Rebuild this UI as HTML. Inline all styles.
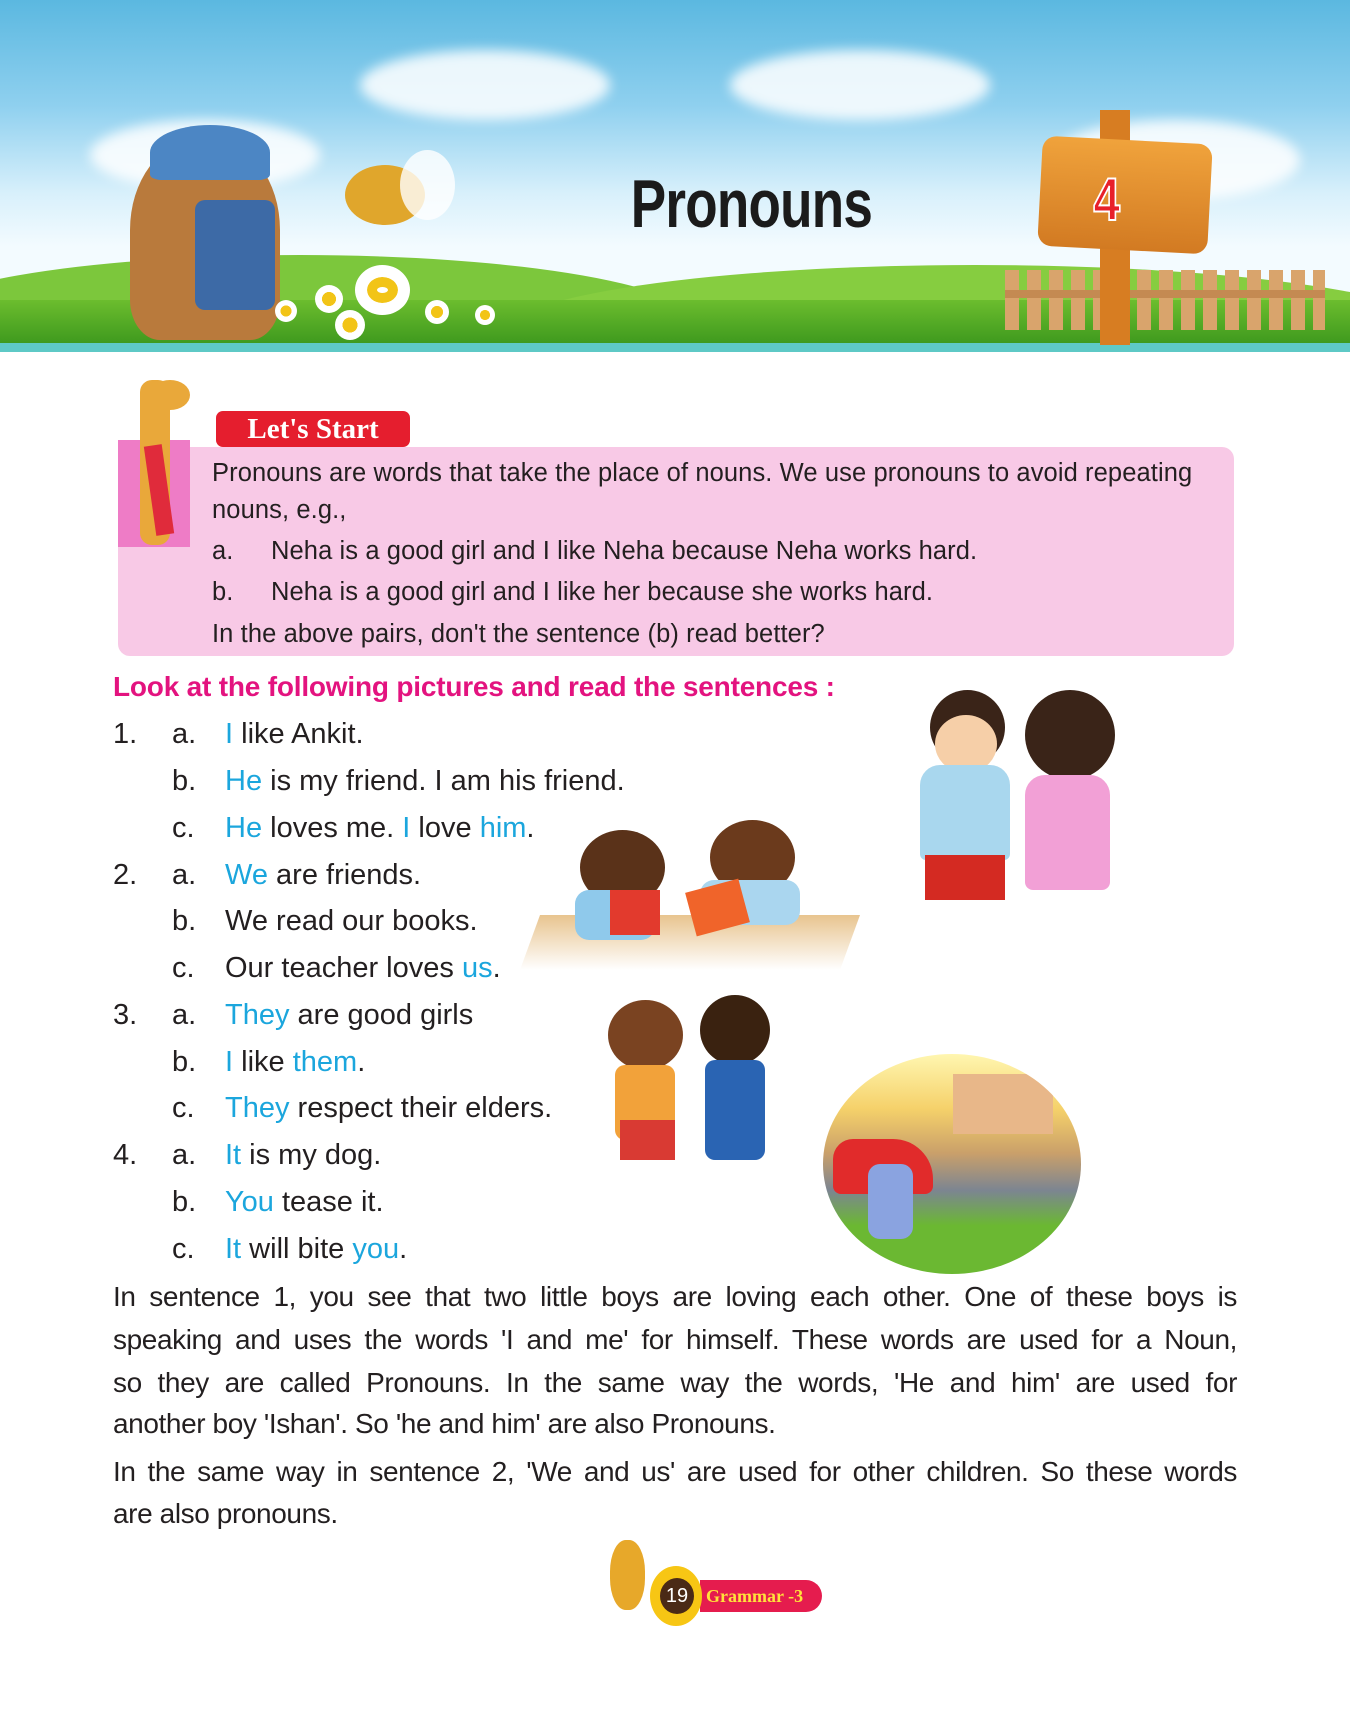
<!DOCTYPE html>
<html><head><meta charset="utf-8"><style>
*{margin:0;padding:0;box-sizing:border-box}
body{width:1350px;height:1725px;position:relative;background:#fff;font-family:"Liberation Sans",sans-serif;color:#231f20;overflow:hidden}
.a{position:absolute;white-space:nowrap}
.b{color:#1ba6dd}
.box{position:absolute;left:118px;top:447px;width:1116px;height:209px;background:#f8c9e6;border-radius:12px}
.t{font-size:25.5px;letter-spacing:0.1px;line-height:30px}
.l{font-size:29px;letter-spacing:0;line-height:34px}
.p{position:absolute;left:113px;width:1124px;font-size:28px;letter-spacing:-0.4px;line-height:43px;text-align:justify;text-align-last:justify;white-space:nowrap}
#hd{position:absolute;left:0;top:0;width:1350px;height:352px;overflow:hidden}
</style></head><body>
<div id="hd">
<div class="a" style="left:0;top:0;width:1350px;height:352px;background:linear-gradient(#5bb8e0 0%,#8fd0ef 30%,#d8f0fb 55%,#f3fbff 70%)"></div>
<div class="a" style="left:90px;top:120px;width:230px;height:70px;border-radius:50%;background:rgba(255,255,255,.85);filter:blur(6px)"></div>
<div class="a" style="left:360px;top:50px;width:250px;height:70px;border-radius:50%;background:rgba(255,255,255,.85);filter:blur(6px)"></div>
<div class="a" style="left:730px;top:50px;width:260px;height:70px;border-radius:50%;background:rgba(255,255,255,.85);filter:blur(6px)"></div>
<div class="a" style="left:1050px;top:120px;width:250px;height:80px;border-radius:50%;background:rgba(255,255,255,.85);filter:blur(6px)"></div>
<div class="a" style="left:-100px;top:255px;width:800px;height:140px;border-radius:50%;background:#7cc73c"></div>
<div class="a" style="left:500px;top:265px;width:950px;height:140px;border-radius:50%;background:#86cd40"></div>
<div class="a" style="left:0;top:300px;width:1350px;height:43px;background:linear-gradient(#6cbd2e,#3f9a1e)"></div>
<div class="a" style="left:0;top:343px;width:1350px;height:9px;background:#5ec9c6"></div>
<div class="a" style="left:1005px;top:270px;width:320px;height:60px;background:repeating-linear-gradient(90deg,#d9a46c 0 14px,transparent 14px 22px)"></div>
<div class="a" style="left:1005px;top:290px;width:320px;height:8px;background:#c48a52"></div>
<div class="a" style="left:130px;top:140px;width:150px;height:200px;border-radius:45% 45% 20% 20%;background:#b97a3c"></div>
<div class="a" style="left:150px;top:125px;width:120px;height:55px;border-radius:50% 50% 10% 10%;background:#4c86c4"></div>
<div class="a" style="left:195px;top:200px;width:80px;height:110px;background:#3d6aa6;border-radius:10px"></div>
<div class="a" style="left:345px;top:165px;width:80px;height:60px;border-radius:50%;background:#e0a62c"></div>
<div class="a" style="left:400px;top:150px;width:55px;height:70px;border-radius:50%;background:rgba(255,255,255,.8)"></div>
<div class="a" style="left:355px;top:265px;width:55px;height:50px;border-radius:50%;background:#fff;border:12px solid #fff;box-shadow:inset 0 0 0 10px #f2c417"></div>
<div class="a" style="left:315px;top:285px;width:28px;height:28px;border-radius:50%;background:radial-gradient(#f2c417 35%,#fff 36%)"></div>
<div class="a" style="left:335px;top:310px;width:30px;height:30px;border-radius:50%;background:radial-gradient(#f2c417 35%,#fff 36%)"></div>
<div class="a" style="left:425px;top:300px;width:24px;height:24px;border-radius:50%;background:radial-gradient(#f2c417 35%,#fff 36%)"></div>
<div class="a" style="left:475px;top:305px;width:20px;height:20px;border-radius:50%;background:radial-gradient(#f2c417 35%,#fff 36%)"></div>
<div class="a" style="left:275px;top:300px;width:22px;height:22px;border-radius:50%;background:radial-gradient(#f2c417 35%,#fff 36%)"></div>
<div class="a" style="left:1100px;top:110px;width:30px;height:235px;background:#d77d22"></div>
<div class="a" style="left:1040px;top:140px;width:170px;height:110px;background:linear-gradient(#f0a33c,#d27a22);border-radius:14px;transform:rotate(3deg)"></div>
<div class="a" style="left:1090px;top:165px;font-size:60px;font-weight:bold;color:#e8202a;transform:scaleX(.8);-webkit-text-stroke:2px #fff">4</div>
<div class="a" style="left:600px;top:165px;width:280px;text-align:center;font-size:68px;font-weight:bold;color:#1b1b1b;transform:scaleX(.78);letter-spacing:-1px">Pronouns</div>
</div>

<div class="box"></div>
<div class="a" style="left:118px;top:440px;width:72px;height:107px;background:#ee7cc6"></div>
<div class="a" style="left:140px;top:380px;width:30px;height:165px;background:#e9a83a;border-radius:12px"></div>
<div class="a" style="left:150px;top:380px;width:40px;height:30px;background:#e9a83a;border-radius:50%"></div>
<div class="a" style="left:150px;top:445px;width:18px;height:90px;background:#e02b3b;transform:rotate(-8deg)"></div>

<div class="a" style="left:216px;top:411px;width:194px;height:36px;background:#e51e2e;border-radius:7px"></div>
<div class="a" style="left:216px;top:411px;width:194px;height:36px;line-height:36px;text-align:center;color:#fff;font-family:'Liberation Serif',serif;font-size:29px;font-weight:bold">Let's Start</div>
<div class="a t" style="left:212px;top:458px">Pronouns are words that take the place of nouns. We use pronouns to avoid repeating</div>
<div class="a t" style="left:212px;top:495px">nouns, e.g.,</div>
<div class="a t" style="left:212px;top:536px">a.</div><div class="a t" style="left:271px;top:536px">Neha is a good girl and I like Neha because Neha works hard.</div>
<div class="a t" style="left:212px;top:577px">b.</div><div class="a t" style="left:271px;top:577px">Neha is a good girl and I like her because she works hard.</div>
<div class="a t" style="left:212px;top:619px">In the above pairs, don't the sentence (b) read better?</div>

<div class="a" style="left:113px;top:671px;font-size:28px;font-weight:bold;color:#e3137f;letter-spacing:-0.2px">Look at the following pictures and read the sentences :</div>

<div class="a l" style="left:113px;top:717px">1.</div><div class="a l" style="left:172px;top:717px">a.</div><div class="a l" style="left:225px;top:717px"><span class="b">I</span> like Ankit.</div>
<div class="a l" style="left:172px;top:764px">b.</div><div class="a l" style="left:225px;top:764px"><span class="b">He</span> is my friend. I am his friend.</div>
<div class="a l" style="left:172px;top:811px">c.</div><div class="a l" style="left:225px;top:811px"><span class="b">He</span> loves me. <span class="b">I</span> love <span class="b">him</span>.</div>
<div class="a l" style="left:113px;top:858px">2.</div><div class="a l" style="left:172px;top:858px">a.</div><div class="a l" style="left:225px;top:858px"><span class="b">We</span> are friends.</div>
<div class="a l" style="left:172px;top:904px">b.</div><div class="a l" style="left:225px;top:904px">We read our books.</div>
<div class="a l" style="left:172px;top:951px">c.</div><div class="a l" style="left:225px;top:951px">Our teacher loves <span class="b">us</span>.</div>
<div class="a l" style="left:113px;top:998px">3.</div><div class="a l" style="left:172px;top:998px">a.</div><div class="a l" style="left:225px;top:998px"><span class="b">They</span> are good girls</div>
<div class="a l" style="left:172px;top:1045px">b.</div><div class="a l" style="left:225px;top:1045px"><span class="b">I</span> like <span class="b">them</span>.</div>
<div class="a l" style="left:172px;top:1091px">c.</div><div class="a l" style="left:225px;top:1091px"><span class="b">They</span> respect their elders.</div>
<div class="a l" style="left:113px;top:1138px">4.</div><div class="a l" style="left:172px;top:1138px">a.</div><div class="a l" style="left:225px;top:1138px"><span class="b">It</span> is my dog.</div>
<div class="a l" style="left:172px;top:1185px">b.</div><div class="a l" style="left:225px;top:1185px"><span class="b">You</span> tease it.</div>
<div class="a l" style="left:172px;top:1232px">c.</div><div class="a l" style="left:225px;top:1232px"><span class="b">It</span> will bite <span class="b">you</span>.</div>

<div class="a" style="left:930px;top:690px;width:75px;height:75px;border-radius:50%;background:#3a2418"></div>
<div class="a" style="left:935px;top:715px;width:62px;height:58px;border-radius:50%;background:#f6cfa8"></div>
<div class="a" style="left:920px;top:765px;width:90px;height:95px;background:#a9d7ee;border-radius:20px 20px 6px 6px"></div>
<div class="a" style="left:925px;top:855px;width:80px;height:45px;background:#d42a22"></div>
<div class="a" style="left:1025px;top:690px;width:90px;height:90px;border-radius:50%;background:#3a2418"></div>
<div class="a" style="left:1025px;top:775px;width:85px;height:115px;background:#f2a0d6;border-radius:20px 20px 8px 8px"></div>
<div class="a" style="left:530px;top:915px;width:320px;height:55px;background:linear-gradient(#e8c48f,#fff);transform:skewX(-20deg)"></div>
<div class="a" style="left:580px;top:830px;width:85px;height:75px;border-radius:50%;background:#5a3219"></div>
<div class="a" style="left:575px;top:890px;width:80px;height:50px;background:#8fc9eb;border-radius:14px"></div>
<div class="a" style="left:610px;top:890px;width:50px;height:45px;background:#e23a2d"></div>
<div class="a" style="left:710px;top:820px;width:85px;height:75px;border-radius:50%;background:#6b3a1c"></div>
<div class="a" style="left:700px;top:880px;width:100px;height:45px;background:#aad6ef;border-radius:14px"></div>
<div class="a" style="left:690px;top:885px;width:55px;height:45px;background:#f0642a;transform:rotate(-15deg)"></div>
<div class="a" style="left:608px;top:1000px;width:75px;height:70px;border-radius:50%;background:#7a4321"></div>
<div class="a" style="left:615px;top:1065px;width:60px;height:75px;background:#f2a23a;border-radius:10px"></div>
<div class="a" style="left:620px;top:1120px;width:55px;height:40px;background:#d93a33"></div>
<div class="a" style="left:700px;top:995px;width:70px;height:70px;border-radius:50%;background:#3a2210"></div>
<div class="a" style="left:705px;top:1060px;width:60px;height:100px;background:#2a64b3;border-radius:10px"></div>
<div class="a" style="left:823px;top:1054px;width:258px;height:220px;border-radius:50%;overflow:hidden;background:linear-gradient(#fff6b0 0%,#f5d16a 25%,#caa06a 45%,#7c8591 62%,#6bb832 78%)">
<div style="position:absolute;left:10px;top:85px;width:100px;height:55px;background:#e12b2b;border-radius:20px 40px 8px 8px"></div>
<div style="position:absolute;left:130px;top:20px;width:100px;height:60px;background:#e8b789"></div>
<div style="position:absolute;left:45px;top:110px;width:45px;height:75px;background:#8aa3e0;border-radius:12px"></div>
</div>

<div class="p" style="top:1275px">In sentence 1, you see that two little boys are loving each other. One of these boys is</div>
<div class="p" style="top:1318px">speaking and uses the words 'I and me' for himself. These words are used for a Noun,</div>
<div class="p" style="top:1361px">so they are called Pronouns. In the same way the words, 'He and him' are used for</div>
<div class="p" style="top:1402px;text-align-last:left">another boy 'Ishan'. So 'he and him' are also Pronouns.</div>
<div class="p" style="top:1450px">In the same way in sentence 2, 'We and us' are used for other children. So these words</div>
<div class="p" style="top:1492px;text-align-last:left">are also pronouns.</div>

<div class="a" style="left:700px;top:1580px;width:122px;height:32px;background:#e51c4e;border-radius:0 16px 16px 0"></div>
<div class="a" style="left:706px;top:1582px;font-family:'Liberation Serif',serif;font-weight:bold;font-size:18px;color:#ffe23a;line-height:28px">Grammar -3</div>
<div class="a" style="left:650px;top:1566px;width:52px;height:60px;border-radius:50%;background:#f7c614"></div>
<div class="a" style="left:660px;top:1578px;width:34px;height:36px;border-radius:50%;background:#4a2a16;color:#fff;font-size:20px;text-align:center;line-height:36px">19</div>
<div class="a" style="left:610px;top:1540px;width:35px;height:70px;border-radius:45%;background:#e7a82a"></div>
</body></html>
